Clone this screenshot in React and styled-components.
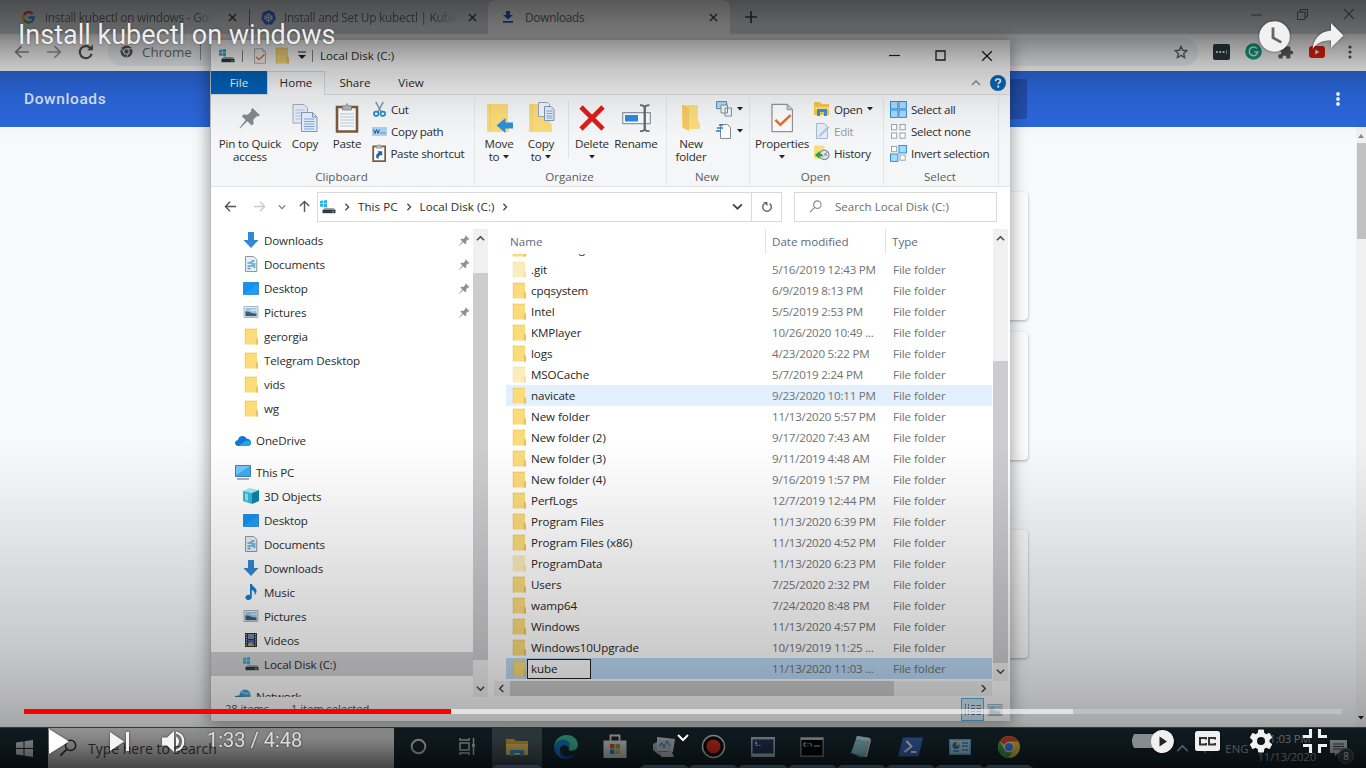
import React from "react";
import styled, { createGlobalStyle, css } from "styled-components";

const Global = createGlobalStyle`
  *, *::before, *::after { box-sizing: border-box; }
  html, body { margin: 0; padding: 0; overflow: hidden; }
  body { font-family: "Open Sans", "Noto Sans", sans-serif; font-size: 12px; color: #222; }
  svg { display: block; flex: none; }
`;

const Stage = styled.div`
  position: relative;
  width: 1366px;
  height: 768px;
  overflow: hidden;
  background: #f8f9fa;
  display: flex;
  flex-direction: column;
`;

/* ---------- browser ---------- */

const TabStrip = styled.div`
  height: 34px;
  background: #dadde1;
  display: flex;
  align-items: stretch;
  flex: none;
  font-size: 11.8px;
  color: #6a6c6f;
`;
const Tab = styled.div`
  width: ${(p) => p.$w}px;
  display: flex;
  align-items: center;
  padding: 0 ${(p) => p.$right}px 0 ${(p) => p.$left}px;
  gap: ${(p) => p.$gap || 9}px;
  ${(p) => p.$active && css`background: #fff; border-radius: 8px 8px 0 0;`}
`;
const TabText = styled.span`
  flex: 1;
  white-space: nowrap;
  overflow: hidden;
  letter-spacing: -0.22px;
  ${(p) => p.$fade && css`mask-image: linear-gradient(90deg, #000 86%, transparent 99%);`}
`;
const TabRule = styled.i`
  width: 1px;
  height: 17px;
  align-self: center;
  background: #777;
`;
const NewTab = styled.div`
  display: flex;
  align-items: center;
  padding-left: 15px;
`;
const Caption = styled.div`
  margin-left: auto;
  display: flex;
  align-items: center;
  gap: 35px;
  padding: 0 11px 6px 0;
`;
const Toolbar = styled.div`
  height: 37px;
  flex: none;
  background: #fff;
  display: flex;
  align-items: center;
  padding: 0 14px 2px 14px;
`;
const NavIcons = styled.div`
  display: flex;
  gap: 16px;
  margin-right: 14px;
`;
const Omnibox = styled.div`
  flex: 1;
  height: 28px;
  border-radius: 14px;
  background: #f0f1f3;
  display: flex;
  align-items: center;
  padding: 0 10px 0 12px;
  gap: 9px;
  font-size: 13.3px;
  color: #6b6f74;
`;
const OmniRule = styled.i`
  width: 1px;
  height: 16px;
  background: #999;
  margin-left: -1px;
`;
const Extensions = styled.div`
  display: flex;
  align-items: center;
  gap: 15px;
  margin-left: 15px;
  & > :last-child { margin-left: 8px; }
`;
const PushRight = styled.div`
  margin-left: auto;
`;
const PageHeader = styled.header`
  height: 56px;
  flex: none;
  background: #2b67dc;
  color: #dfe8fa;
  display: flex;
  align-items: center;
  padding: 0 26px 0 24px;
  font: 500 15.5px Roboto, sans-serif;
  letter-spacing: 0.6px;
`;
const HeaderSearch = styled.div`
  width: 680px;
  height: 40px;
  border-radius: 3px;
  background: #2350ae;
  margin-left: 241px;
`;
const HeaderMenu = styled.div`
  margin-left: auto;
`;
const Page = styled.main`
  flex: 1;
  display: flex;
  background: #f8f9fb;
  min-height: 0;
`;
const Cards = styled.div`
  flex: 1;
  display: flex;
  flex-direction: column;
  padding: 65px 0 0 347px;
`;
const Card = styled.div`
  width: 681px;
  height: 128px;
  flex: none;
  margin-bottom: ${(p) => p.$gap}px;
  background: #fcfcfd;
  border-radius: 4px;
  box-shadow: 0 1px 3px rgba(0, 0, 0, 0.32);
`;
const PageScroll = styled.div`
  width: 10px;
  background: #f1f1f1;
  display: flex;
  flex-direction: column;
  align-items: center;
  padding: 7px 0;
`;
const PageThumb = styled.i`
  width: 9px;
  height: 96px;
  background: #c1c1c1;
  margin: 5px 0 auto 1px;
`;

/* ---------- taskbar ---------- */

const Taskbar = styled.footer`
  height: 41px;
  flex: none;
  background: #182a33;
  border-top: 1px solid #4b5c60;
  display: flex;
  color: #d4d8da;
`;
const StartBtn = styled.div`
  width: 48px;
  display: grid;
  place-items: center;
`;
const SearchBox = styled.div`
  width: 346px;
  background: #e4e4e4;
  display: flex;
  align-items: center;
  padding-left: 11px;
  gap: 11px;
  font-size: 14px;
  color: #444;
`;
const TaskItem = styled.div`
  width: 49.2px;
  display: grid;
  place-items: center;
  border-bottom: 3px solid ${(p) => (p.$open ? "#6f9cc8" : "transparent")};
  border-left: 4px solid transparent;
  border-right: 4px solid transparent;
  background-clip: padding-box;
  ${(p) => p.$active && css`background: #4a5c63; background-clip: border-box; border-color: #4a5c63; border-bottom-color: #7aaad8;`}
`;
const Tray = styled.div`
  margin-left: auto;
  display: flex;
  align-items: center;
  gap: 10px;
  padding-right: 18px;
  font-size: 11.4px;
  color: #aab2b6;
`;
const Clock = styled.div`
  text-align: center;
  line-height: 18px;
  letter-spacing: -0.2px;
  margin: 0 4px 0 -1px;
`;
const Notice = styled.div`
  display: flex;
  align-items: flex-end;
`;
const Badge = styled.span`
  width: 16px;
  height: 16px;
  border-radius: 50%;
  margin: 0 -6px -8px -9px;
  background: #384247;
  border: 1px solid #6a7276;
  font-size: 10px;
  line-height: 14px;
  text-align: center;
  color: #e6e6e6;
`;

/* ---------- explorer window ---------- */

const Explorer = styled.section`
  position: absolute;
  left: 210px;
  top: 40px;
  width: 800px;
  height: 681px;
  background: #fff;
  border-left: 1px solid #b9bcc2;
  box-shadow: 0 2px 14px 2px rgba(0, 0, 0, 0.34);
  display: flex;
  flex-direction: column;
  font-size: 11.6px;
  color: #2c2c2c;
`;
const TitleBar = styled.div`
  height: 31px;
  flex: none;
  display: flex;
  align-items: center;
  padding: 0 17px 0 8px;
`;
const QuickAccess = styled.div`
  display: flex;
  align-items: center;
  gap: 8px;
`;
const TitleText = styled.span`
  margin-left: 7px;
`;
const ThinRule = styled.i`
  width: 1px;
  height: 12px;
  background: #888;
  margin: 0 ${(p) => p.$r}px 0 ${(p) => p.$l}px;
`;
const WinButtons = styled.div`
  margin-left: auto;
  display: flex;
  align-items: center;
  gap: 35px;
`;
const RibbonTabs = styled.div`
  height: 24px;
  flex: none;
  display: flex;
  align-items: stretch;
  border-bottom: 1px solid #d9dadb;
  background: linear-gradient(#fafafa, #f2f2f2);
  text-align: center;
  line-height: 24px;
`;
const RibbonTab = styled.div`
  width: ${(p) => p.$w}px;
  ${(p) => p.$kind === "file" && css`background: #0062b8; color: #fff;`}
  ${(p) => p.$kind === "on" && css`background: #f7f8f9; border: 1px solid #d9dadb; border-bottom: 0; height: 24px; line-height: 22px;`}
`;
const RibbonEnd = styled.div`
  margin-left: auto;
  display: flex;
  align-items: center;
  gap: 9px;
  padding-right: 4px;
`;
const Ribbon = styled.div`
  height: 92px;
  flex: none;
  background: #f5f6f7;
  border-bottom: 1px solid #dfe1e3;
  display: flex;
`;
const Group = styled.div`
  width: ${(p) => p.$w}px;
  display: flex;
  flex-direction: column;
  border-right: 1px solid #e3e5e7;
  margin: 3px 0 1px;
`;
const GroupBody = styled.div`
  height: 71px;
  flex: none;
  display: flex;
  padding: 0 0 0 ${(p) => p.$pad}px;
`;
const GroupName = styled.div`
  text-align: center;
  line-height: 16px;
  margin-left: -2px;
  color: #5c5c5c;
`;
const BigButton = styled.div`
  width: ${(p) => p.$w}px;
  display: flex;
  flex-direction: column;
  align-items: center;
  line-height: 13px;
  text-align: center;
  white-space: nowrap;
  letter-spacing: -0.2px;
`;
const BigIcon = styled.div`
  height: 39px;
  display: grid;
  place-items: center;
`;
const LabelLine = styled.div`
  display: flex;
  align-items: center;
  gap: 4px;
  min-height: 13px;
`;
const SmallColumn = styled.div`
  display: flex;
  flex-direction: column;
  margin-left: ${(p) => p.$ml}px;
`;
const SmallButton = styled.div`
  height: 22px;
  display: flex;
  align-items: center;
  gap: 4px;
  white-space: nowrap;
  letter-spacing: -0.28px;
  color: ${(p) => (p.$dim ? "#999" : "#2c2c2c")};
`;
const InnerRule = styled.i`
  width: 1px;
  height: 58px;
  background: #dfe1e3;
  margin: 2px 2px 0 6px;
`;
const AddressRow = styled.div`
  height: 39px;
  flex: none;
  display: flex;
  align-items: center;
  padding: 0 13px 0 13px;
`;
const AddrNav = styled.div`
  width: 93px;
  display: flex;
  align-items: center;
  gap: 12px;
  & > :first-child { margin-right: 4px; }
`;
const AddrBox = styled.div`
  width: 465px;
  height: 30px;
  border: 1px solid #d9d9d9;
  display: flex;
  align-items: center;
  padding-left: 2px;
  letter-spacing: 0.05px;
`;
const Crumb = styled.span`
  margin: 0 7px;
`;
const Refresh = styled.div`
  width: 30px;
  align-self: stretch;
  border-left: 1px solid #d9d9d9;
  display: grid;
  place-items: center;
  margin-left: 8px;
`;
const SearchField = styled.div`
  margin-left: 12px;
  flex: 1;
  height: 30px;
  border: 1px solid #d9d9d9;
  display: flex;
  align-items: center;
  gap: 13px;
  padding-left: 14px;
  color: #6d6d6d;
`;
const Body = styled.div`
  height: 471px;
  flex: none;
  display: flex;
`;
const NavPane = styled.nav`
  width: 262px;
  padding-top: 2px;
  overflow: hidden;
`;
const NavRow = styled.div`
  height: 24px;
  display: flex;
  align-items: center;
  gap: 5px;
  padding: 0 3px 0 ${(p) => (p.$root ? 24 : 32)}px;
  margin-top: ${(p) => (p.$root ? 8 : 0)}px;
  background: ${(p) => (p.$selected ? "#d4d4d6" : "transparent")};
  white-space: nowrap;
  letter-spacing: -0.14px;
`;
const PinSlot = styled.div`
  margin-left: auto;
`;
const VScroll = styled.div`
  width: 15px;
  background: #f0f0f0;
  display: flex;
  flex-direction: column;
  align-items: center;
  padding: ${(p) => p.$pad};
  margin-top: 3px;
`;
const VThumb = styled.i`
  width: 15px;
  height: ${(p) => p.$h}px;
  margin: ${(p) => p.$top}px 0 auto;
  background: #cdcdcf;
`;
const Files = styled.div`
  margin-left: 6px;
  flex: 1;
  display: flex;
  flex-direction: column;
`;
const FilesTop = styled.div`
  display: flex;
  height: 455px;
`;
const Table = styled.div`
  width: 499px;
  padding: 3px 1px 0 12px;
`;
const HeadRow = styled.div`
  height: 25px;
  display: flex;
  line-height: 25px;
  color: #5c6b80;
  padding-left: 4px;
`;
const HeadCell = styled.div`
  width: ${(p) => p.$w}px;
  padding-left: ${(p) => (p.$first ? 0 : 6)}px;
  border-left: ${(p) => (p.$first ? 0 : 1)}px solid #e2e2e2;
`;
const Rows = styled.div`
  height: 425px;
  overflow: hidden;
`;
const FileRow = styled.div`
  height: 21px;
  display: flex;
  align-items: center;
  white-space: nowrap;
  padding-left: 5px;
  color: #727272;
  letter-spacing: -0.08px;
  background: ${(p) => (p.$state === "hover" ? "#e2f0fd" : p.$state === "selected" ? "#bcdcf8" : "transparent")};
  &:first-child { margin-top: -16px; }
`;
const FileName = styled.span`
  width: 241px;
  margin-left: 4px;
  color: #262626;
`;
const NameEdit = styled.span`
  display: block;
  width: 64px;
  height: 20px;
  line-height: 17px;
  margin-left: -4px;
  padding-left: 3px;
  border: 1px solid #222;
  background: #fff;
`;
const FileDate = styled.span`
  width: 121px;
  letter-spacing: -0.23px;
`;
const HScroll = styled.div`
  height: 15px;
  width: 498px;
  background: #f0f0f0;
  display: flex;
  align-items: center;
  padding: 0 4px 0 3px;
`;
const HThumb = styled.i`
  width: 384px;
  height: 15px;
  background: #cdcdcf;
  margin: 0 auto 0 4px;
`;
const StatusBar = styled.div`
  flex: 1;
  display: flex;
  align-items: flex-start;
  padding: 1px 7px 0 14px;
  gap: 22px;
  line-height: 21px;
  color: #4c5468;
  font-size: 11.2px;
  letter-spacing: -0.05px;
`;
const ViewModes = styled.div`
  margin-left: auto;
  display: flex;
  gap: 3px;
  align-items: center;
`;
const ViewOn = styled.div`
  width: 23px;
  height: 23px;
  display: grid;
  place-items: center;
  background: #cfeafa;
  border: 1px solid #56b2e0;
`;

/* ---------- player overlay ---------- */

const Overlay = styled.div`
  position: absolute;
  inset: 0;
  display: flex;
  flex-direction: column;
  justify-content: space-between;
  background:
    linear-gradient(rgba(0,0,0,.66) 0, rgba(0,0,0,.6) 14px, rgba(0,0,0,.53) 32px, rgba(0,0,0,.42) 42px, rgba(0,0,0,.28) 60px, rgba(0,0,0,.18) 75px, rgba(0,0,0,.09) 92px, rgba(0,0,0,.03) 115px, transparent 140px),
    linear-gradient(transparent 440px, rgba(0,0,0,.03) 480px, rgba(0,0,0,.11) 560px, rgba(0,0,0,.19) 640px, rgba(0,0,0,.26) 690px, rgba(0,0,0,.32) 722px, rgba(0,0,0,.43) 740px, rgba(0,0,0,.7) 768px);
`;
const PlayerTop = styled.div`
  display: flex;
  justify-content: space-between;
  align-items: center;
  height: 73px;
  padding: 0 22px 1px 18px;
`;
const VideoTitle = styled.h1`
  margin: 0 0 2px;
  font: 400 27px/32px Roboto, sans-serif;
  color: #eee;
  text-shadow: 0 0 2px rgba(0, 0, 0, 0.5);
`;
const TopActions = styled.div`
  display: flex;
  align-items: center;
  gap: 22px;
  filter: drop-shadow(0 0 1px rgba(0, 0, 0, 0.6));
`;
const PlayerBottom = styled.div`
  height: 59px;
  padding: 0 24px;
`;
const Track = styled.div`
  height: 5px;
  display: flex;
  background: rgba(255, 255, 255, 0.22);
`;
const Played = styled.i`
  width: 427px;
  background: #f00;
`;
const Loaded = styled.i`
  width: 622px;
  background: rgba(255, 255, 255, 0.52);
`;
const Controls = styled.div`
  height: 54px;
  display: flex;
  align-items: center;
  justify-content: space-between;
  filter: drop-shadow(0 0 1px rgba(0, 0, 0, 0.6));
`;
const LeftControls = styled.div`
  width: 400px;
  display: flex;
  align-items: center;
  padding-left: 25px;
`;
const NextSlot = styled.div`
  margin: 0 32px 0 41px;
`;
const TimeText = styled.span`
  margin: -2px 0 0 22px;
  font: 400 20px/24px Roboto, sans-serif;
  color: #ddd;
`;
const MoreSlot = styled.div`
  align-self: flex-start;
  padding-top: 20px;
`;
const RightControls = styled.div`
  width: 400px;
  display: flex;
  align-items: center;
  justify-content: flex-end;
  padding-right: 15px;
`;
const Autoplay = styled.div`
  width: 42px;
  height: 24px;
  display: flex;
  align-items: center;
  justify-content: flex-end;
  background: linear-gradient(#868b8e, #868b8e) 0 50% / 32px 14px no-repeat;
  clip-path: inset(0 round 12px);
  margin-right: 21px;
`;
const GearSlot = styled.div`
  margin: 0 30px 0 29px;
`;

/* ---------- icons ---------- */

const Svg = ({ w, h = w, vb, children, ...rest }) => (
  <svg width={w} height={h} viewBox={vb || `0 0 ${w} ${h}`} fill="none" {...rest}>{children}</svg>
);
const Cross = ({ s = 9, c = "#444", t = 1.5 }) => (
  <Svg w={s} vb="0 0 10 10"><path d="M1 1l8 8M9 1L1 9" stroke={c} strokeWidth={t} /></Svg>
);
const Chevron = ({ dir = "down", c = "#444", s = 9, t = 1.6 }) => {
  const d = { down: "M1 3l4 4 4-4", up: "M1 7l4-4 4 4", left: "M7 1L3 5l4 4", right: "M3 1l4 4-4 4" }[dir];
  return <Svg w={s} vb="0 0 10 10"><path d={d} stroke={c} strokeWidth={t} /></Svg>;
};
const Caret = ({ up, c = "#222" }) => (
  <Svg w={6} h={4}><path d={up ? "M0 4h6L3 0z" : "M0 0h6L3 3.6z"} fill={c} /></Svg>
);
const Folder = ({ pale, h = 17 }) => (
  <Svg w={16} h={h} vb="0 0 16 17" opacity={pale ? 0.5 : 1}>
    <path d="M2 .8h12v9l.9 1.600v5H2z" fill="#fbdc7b" />
    <path d="M2 .8h12v1H2z" fill="#f1cd68" />
    <path d="M12.800 10.500l1.200-1 1 2v5h-2.200z" fill="#eec258" />
    <path d="M2.200 .8v15.700" stroke="#efc961" strokeWidth=".8" />
  </Svg>
);
const Disk = () => (
  <Svg w={16} h={14}>
    <path d="M0 1l3-.4v2.9H0zM3.6.5L7 0v3.5H3.6zM0 4.1h3V7L0 6.6zM3.6 4.1H7v3.5l-3.4-.5z" fill="#27b1e6" />
    <path d="M4.500 8h9l2 2H3z" fill="#9fa4a6" />
    <path d="M2.500 9.800H15.500v3.400H2.500z" fill="#34393b" />
    <path d="M12 11.700h2" stroke="#49c95d" strokeWidth="1.200" />
  </Svg>
);
const DownArrow = () => (
  <Svg w={16}><path d="M5 0h6v8h4.6L8 16 .4 8H5z" fill="#3388d4" /></Svg>
);
const DocIcon = () => (
  <Svg w={16}>
    <path d="M2.5.5h8.300l3 3v12H2.500z" fill="#e9eef2" stroke="#8e989e" />
    <path d="M4.500 7h4v-2M4.500 10h7v2M8.500 5h3M8.500 8h4M4.500 12.500h3" stroke="#4fa3d4" strokeWidth="1.400" />
  </Svg>
);
const DesktopIcon = () => (
  <Svg w={16} h={13}><path d="M.4.4h15.200v12H.4z" fill="#1492f2" stroke="#0f78cf" strokeWidth=".8" /><path d="M1 12L15 2v10z" fill="#2fa6ff" opacity=".5" /></Svg>
);
const PictureIcon = () => (
  <Svg w={16} h={12} vb="0 0 16 13">
    <path d="M.5.5h15v12H.5z" fill="#f4f6f8" stroke="#a2a8ad" />
    <path d="M2 2h12v9H2z" fill="#9cc3ec" /><path d="M2 6c4-1 7 3 12 2v3H2z" fill="#35606c" />
    <path d="M8 4.500h5" stroke="#fff" />
  </Svg>
);
const CloudIcon = () => (
  <Svg w={16} h={11}>
    <path d="M3.500 11C1 11 0 9.500 0 8s1.200-2.700 2.800-2.800C3.500 2.500 5 1 7.400 1c2 0 3.400 1 4.200 2.700C14.500 3.700 16 5.500 16 7.500S14.500 11 12.500 11z" fill="#0f78d4" />
    <path d="M3.500 11l6.500-5c3-1.500 6 0 6 2s-1.500 3-3.500 3z" fill="#2aa0ee" />
  </Svg>
);
const PcIcon = () => (
  <Svg w={16} h={15}>
    <path d="M.5.500h15v11H.5z" fill="#3fa9f5" stroke="#4680a8" /><path d="M1 1h14L1 10z" fill="#8fd1fb" opacity=".7" />
    <path d="M2 14h12" stroke="#7f8a90" strokeWidth="1.300" />
  </Svg>
);
const CubeIcon = () => (
  <Svg w={16}>
    <path d="M0 3l6-3 10 2-6 3z" fill="#a6e8f2" /><path d="M0 3l9 2v11l-9-3z" fill="#35b9d2" /><path d="M9 5l7-3v11l-7 3z" fill="#0d83a8" />
    <path d="M2 5l3 1v7l-3-1z" fill="#8be0ee" />
  </Svg>
);
const MusicIcon = () => (
  <Svg w={16}><path d="M7 0h1.800c.3 2.500 4.700 3.500 4.700 7 0 1.700-.8 3-1.800 4 .3-2.500-.7-4.300-2.900-5v7c0 1.800-1.600 3-3.500 3S2.400 15 2.400 13.500s1.500-2.800 3.300-2.800c.5 0 .9.100 1.300.2z" fill="#1681cf" /></Svg>
);
const VideoIcon = () => (
  <Svg w={16}>
    <path d="M2 1h12v14H2z" fill="#2f3337" /><path d="M5 2h6v5H5z" fill="#6d8bb8" /><path d="M5 8h6v6H5z" fill="#3d63ba" />
    <path d="M5 12l3-2 3 3v1H5z" fill="#b5a04c" /><path d="M3.400 2v12M12.600 2v12" stroke="#c8ccce" strokeDasharray="1.300 1.300" />
  </Svg>
);
const NetworkIcon = () => (
  <Svg w={16} h={15}>
    <circle cx="10" cy="6" r="5.500" fill="#4b9fcf" /><path d="M6 3c3 0 5 3 8 1" stroke="#b9e0f2" />
    <path d="M0 7l8-1v6H0z" fill="#3480ab" /><path d="M1 13h14" stroke="#555" />
  </Svg>
);
const Pin = ({ s = 12, c = "#8a9299" }) => (
  <Svg w={s} vb="0 0 22 22"><path d="M13.500 1L21 8.300l-2.200 1.300-1.200-.4-3.300 3.600.3 4.200-1.900 1.500-4.400-4.200L1 21.500l-.6-.600L6.700 13 2.800 9.200l1.500-1.800 4.400.4 3.500-3.500L12 2.800z" fill={c} /></Svg>
);
const Pages = ({ s = 28 }) => (
  <Svg w={s} vb="0 0 28 28">
    <path d="M2 .500h11l3.500 3.500v15H2z" fill="#e9f0fb" stroke="#9fadbd" /><path d="M4.500 6h9M4.500 9h9M4.500 12h9M4.500 15h5" stroke="#a9c4ea" />
    <path d="M10.500 8.500h11l4.500 4.500v14.500H10.500z" fill="#e4eefd" stroke="#8798ae" /><path d="M21.500 8.500V13H26" stroke="#8798ae" />
    <path d="M13 15h10.500M13 17.500h10.500M13 20h10.500M13 22.500h10.500M13 25h10.500" stroke="#7fa6e6" strokeWidth="1.100" />
  </Svg>
);
const Clipboard = ({ s = 30, arrow }) => (
  <Svg w={s * 0.8} h={s} vb="0 0 24 30">
    <path d="M2 4h20v24.500H2z" fill="#fbfcfd" stroke="#7b5a3e" strokeWidth={arrow ? 3 : 2.600} />
    <path d="M7.500 3h3l1.500-2.500L13.500 3h3v4h-9z" fill="#b5babd" stroke="#767d82" strokeWidth=".7" />
    {arrow ? <path d="M7 23v-5l4-4-2-2h8v8l-2-2-4 3v4z" fill="#245fb5" /> : <path d="M5 11h14M5 14h14M5 17h14M5 20h14M5 23h14" stroke="#b9cadb" />}
  </Svg>
);
const Scissors = () => (
  <Svg w={15} h={17} vb="0 0 15 18">
    <path d="M3.500 1l6 11M11.500 1l-6 11" stroke="#7e98ac" strokeWidth="1.600" />
    <ellipse cx="4" cy="13.500" rx="2.500" ry="2.300" stroke="#1e88d2" strokeWidth="1.700" /><ellipse cx="11" cy="13.500" rx="2.500" ry="2.300" stroke="#1e88d2" strokeWidth="1.700" />
  </Svg>
);
const PathIcon = () => (
  <Svg w={15} h={9}><path d="M0 0h15v9H0z" fill="#a8d2f2" /><path d="M1.500 2.500l1.500 4 1.500-4 1.500 4 1.300-4M8.500 6h1M10.500 6h1M12.500 6h1" stroke="#29516e" /></Svg>
);
const MoveTo = () => (
  <Svg w={28} h={30}>
    <path d="M2 1h21v18l1 3v7H2z" fill="#fadb78" /><path d="M5 1v28" stroke="#f2cb62" /><path d="M28.500 19.500h-8V15l-9 7.500 9 7.500v-4.500h8z" fill="#2f8edb" />
  </Svg>
);
const CopyTo = () => (
  <Svg w={28} h={31}>
    <path d="M2 2h21v18l2 3v7H2z" fill="#fadb78" /><path d="M5 2v28" stroke="#f2cb62" />
    <path d="M11.500.500h9l2 2v12h-11z" fill="#f1f5fb" stroke="#97a3b4" /><path d="M17.500 4.500h6.500l3 3v11h-9.500z" fill="#e3edfc" stroke="#8395ad" />
    <path d="M19.500 9h6M19.500 11.500h6M19.500 14h6M19.500 16h6" stroke="#7da4e0" />
  </Svg>
);
const RenameIcon = () => (
  <Svg w={29} h={28}>
    <path d="M.700 8.700h27.600v11H.7z" fill="#fafcfe" stroke="#8d9aa5" strokeWidth="1.200" /><path d="M3 11h13v6.500H3z" fill="#2d8add" />
    <path d="M18 1.200c3 0 4.500.8 4.500 2.500v21c0 1.500-2 2.500-4.500 2.500M27.500 1.200c-3 0-4.500.8-4.500 2.500v21c0 1.500 2 2.500 4.500 2.500" stroke="#62696f" strokeWidth="1.800" />
  </Svg>
);
const NewFolderIcon = () => (
  <Svg w={20} h={29}><path d="M1 2h16v16l2 3v5H7l-6-2z" fill="#fbdc7c" /><path d="M1 2l7 3v23l-6-3z" fill="#f2ca64" /></Svg>
);
const PropsIcon = ({ s = 30 }) => (
  <Svg w={s * 0.75} h={s} vb="0 0 23 30">
    <path d="M1 1h15.500L22 6.500V29H1z" fill="#fbfbfb" stroke="#8f9498" strokeWidth="1.300" /><path d="M16.500 1v5.500H22" fill="#cfd3d5" stroke="#8f9498" />
    <path d="M4.500 17l5 5L20 12" stroke="#ee6a28" strokeWidth="2.500" />
  </Svg>
);
const NewItemIcon = () => (
  <Svg w={17}><path d="M.6.600h10v7H.6z" fill="#b8dbf2" stroke="#5189ae" /><path d="M5 4h6.500v8H5zM9 7h6.500v8H9z" fill="#f4f8fb" stroke="#7b8e9d" /></Svg>
);
const EasyAccessIcon = () => (
  <Svg w={17}><path d="M4.500 1.500h7l3 3v11h-10z" fill="#fafbfc" stroke="#828c94" /><path d="M3 2h4M1 5h6M0 8h5" stroke="#2e7cc9" strokeWidth="1.500" /></Svg>
);
const OpenIcon = () => (
  <Svg w={16} h={14}><path d="M0 0h6l1.500 2H15v11H0z" fill="#f3c54b" /><path d="M1 5h14v3H1z" fill="#fbe08a" /><path d="M3 14V7h10v7h-3v-4H6v4z" fill="#3d8fc9" /></Svg>
);
const EditIcon = () => (
  <Svg w={16}><path d="M2.500.500h8l3 3v12h-11z" fill="#e2edf8" stroke="#a6b8cb" /><path d="M5 12l9-9 1.500 1.500-9 9L4 14z" fill="#b5c6d8" /></Svg>
);
const HistoryIcon = () => (
  <Svg w={16} h={16} vb="0 0 17 16">
    <path d="M0 0h11v14H0z" fill="#f9dc80" /><circle cx="11" cy="10" r="5" fill="#dce5ea" stroke="#7c8b94" strokeWidth="1.200" /><path d="M11 10l3-3M11 10h3" stroke="#777" />
    <path d="M1 10l5-4v2.500c2 0 3.500 1 4 4C8.500 11 7.500 11 6 11.200V14z" fill="#28a03c" />
  </Svg>
);
const SelectGrid = ({ on }) => (
  <Svg w={17}>
    {[[1, 1], [9.5, 1], [1, 9.5], [9.5, 9.5]].map(([x, y], i) => {
      const lit = on[i] === "1";
      return <rect key={i} x={lit ? x - 0.5 : x + 0.5} y={lit ? y - 0.5 : y + 0.5} width={lit ? 7.4 : 5.2} height={lit ? 7.4 : 5.2} fill={lit ? "#a6dbff" : "#fff"} stroke={lit ? "#2f8fd6" : "#9aa3aa"} strokeWidth="1" />;
    })}
  </Svg>
);
const Magnifier = ({ s = 13, c = "#888" }) => (
  <Svg w={s} vb="0 0 14 14"><circle cx="9" cy="5" r="4" stroke={c} strokeWidth="1.200" /><path d="M6 8l-5 5" stroke={c} strokeWidth="1.300" /></Svg>
);
const Arrow = ({ dir, c = "#555", w = 13, t = 1.5 }) => {
  const d = { left: "M13 7H1.500M6.500 2l-5 5 5 5", right: "M1 7h11.500M7.500 2l5 5-5 5", up: "M7 13V1.500M2 6.500l5-5 5 5" }[dir];
  return <Svg w={w} vb="0 0 14 14"><path d={d} stroke={c} strokeWidth={t} /></Svg>;
};
const ReloadIcon = ({ s = 12, c = "#555", t = 1.7 }) => (
  <Svg w={s} vb="0 0 14 14"><path d="M12 8.500A5.300 5.300 0 1 1 10.800 3.500" stroke={c} strokeWidth={t} /><path d="M13 .500v5H8z" fill={c} /></Svg>
);
const RefreshIcon = () => (
  <Svg w={12} vb="0 0 14 14"><path d="M10 3a5 5 0 1 1-6 0" stroke="#666" strokeWidth="1.700" /><path d="M2.500 1.200h5v5z" fill="#666" /></Svg>
);
const DotsV = ({ c, r = 1.7 }) => (
  <Svg w={4} h={14}><circle cx="2" cy="2" r={r} fill={c} /><circle cx="2" cy="7" r={r} fill={c} /><circle cx="2" cy="12" r={r} fill={c} /></Svg>
);
const ChromeMono = () => (
  <Svg w={13} vb="0 0 14 14"><circle cx="7" cy="7" r="6.500" fill="#55585c" /><circle cx="7" cy="7" r="2.900" fill="#55585c" stroke="#e6e6e6" strokeWidth="1.200" /><path d="M7 3.900h6M4.300 8.500l-3-5M9.600 8.500l-3 5" stroke="#e6e6e6" /></Svg>
);
const Google = () => (
  <Svg w={13} vb="0 0 14 14" strokeWidth="2.500">
    <path d="M11.500 3.100A5.600 5.600 0 0 0 2 4.600" stroke="#ea4335" /><path d="M2 4.600a5.600 5.600 0 0 0 0 4.900" stroke="#fbbc05" />
    <path d="M2 9.500a5.600 5.600 0 0 0 8.500 1.700" stroke="#34a853" /><path d="M7 7h5.600c0 1.800-.7 3.200-2.100 4.200" stroke="#4285f4" />
  </Svg>
);
const Kube = () => (
  <Svg w={15}>
    <path d="M7.500 0l5.800 2.800 1.500 6.200-4 5.500H4.200L.2 9l1.500-6.200z" fill="#2f6de0" />
    <circle cx="7.500" cy="7.500" r="3.200" stroke="#fff" /><path d="M7.500 2.500v10M2.800 6l9.400 3M12.200 6L2.800 9" stroke="#fff" strokeWidth=".8" />
  </Svg>
);
const DownloadTab = () => (
  <Svg w={10} h={12}><path d="M3 0h4v4h3L5 8.500 0 4h3zM0 10h10v1.800H0z" fill="#2462d8" /></Svg>
);
const Star = () => (
  <Svg w={14} vb="0 0 24 24"><path d="M12 2.500l2.900 6.600 7.100.6-5.400 4.700 1.600 7L12 17.700l-6.200 3.700 1.600-7L2 9.700l7.100-.6z" stroke="#5f6368" strokeWidth="2.400" /></Svg>
);
const LastPass = () => (
  <Svg w={17} h={16}><rect width="17" height="16" rx="2" fill="#2b3a42" /><circle cx="4" cy="8" r="1.100" fill="#fff" /><circle cx="7.300" cy="8" r="1.100" fill="#fff" /><circle cx="10.600" cy="8" r="1.100" fill="#fff" /><path d="M13.500 6v4" stroke="#aaa" /></Svg>
);
const Grammarly = () => (
  <Svg w={17}><circle cx="8.500" cy="8.500" r="8.300" fill="#12a386" /><path d="M11.800 5.500a4.300 4.300 0 1 0 1 3.500H9.500" stroke="#e8f5f2" strokeWidth="1.500" /></Svg>
);
const Puzzle = () => (
  <Svg w={17} vb="0 0 24 24"><path d="M20.500 11H19V7a2 2 0 0 0-2-2h-4V3.500a2.500 2.500 0 0 0-5 0V5H4a2 2 0 0 0-2 2v3.800h1.500a2.700 2.700 0 0 1 0 5.400H2V20a2 2 0 0 0 2 2h3.800v-1.500a2.700 2.700 0 0 1 5.400 0V22H17a2 2 0 0 0 2-2v-4h1.500a2.500 2.500 0 0 0 0-5z" fill="#5f6368" /></Svg>
);
const YouTube = () => (
  <Svg w={16} h={12}><rect width="16" height="12" rx="3" fill="#ef1f10" /><path d="M6.200 3.500v5l4.300-2.500z" fill="#fff" /></Svg>
);
const Help = () => (
  <Svg w={16}>
    <circle cx="8" cy="8" r="8" fill="#0a68b8" /><path d="M5.600 6.200C5.600 4.700 6.600 4 8 4s2.400.8 2.400 2c0 1.600-2.200 1.700-2.200 3.300" stroke="#fff" strokeWidth="1.700" /><circle cx="8.200" cy="11.700" r="1.100" fill="#fff" />
  </Svg>
);
const WinLogo = () => (
  <Svg w={17}><path d="M0 2.500L7.500 1.400v6.600H0zM8.500 1.300L17 0v8H8.500zM0 9h7.500v6.600L0 14.500zM8.500 9H17v8l-8.500-1.300z" fill="#d5dadd" /></Svg>
);
const TaskView = () => (
  <Svg w={18} h={17}><path d="M1 5h9v7H1zM1 0v2h9V0M1 17v-2h9v2M14.500 0v17" stroke="#c4cacd" strokeWidth="1.500" /><path d="M13 6h3v3h-3z" fill="#c4cacd" /></Svg>
);
const TaskFolder = () => (
  <Svg w={22} h={18}><path d="M0 1h8l2 2h12v14H0z" fill="#e9ab32" /><path d="M0 6h22v11H0z" fill="#fdd868" /><path d="M4 18v-6h14v6h-4v-3H8v3z" fill="#3c9edb" /></Svg>
);
const Edge = () => (
  <Svg w={26} vb="0 0 24 24">
    <path d="M1 13C1 6 6 1 12.500 1 19 1 23 5.500 23 10c0 3.500-2.500 5.500-5.500 5.500-2 0-3.300-.7-3-1.500.8-2 .5-5-3-6C7 7 3 9 1 13z" fill="#43c9a0" />
    <path d="M1 12C2.500 6 8 3.500 13 6c3 1.500 3 5 1.500 7-3-5-9-2-8 3 .7 3.500 4 6 8 6.500C7 24.500 1 19 1 12z" fill="#1b7ed6" />
    <path d="M6.500 15c.5 5 7 8 14.500 3-2.500 4-7 5.500-11 4.500-3-1-4.500-4-3.500-7.500z" fill="#1255a8" />
  </Svg>
);
const Store = () => (
  <Svg w={24} h={25}>
    <path d="M7.500 7V1.500h9V7" stroke="#dfe3e5" strokeWidth="1.800" /><path d="M.5 6.500h23V24H.5z" fill="#e3e6e7" />
    <path d="M7 10h4.500v4.500H7z" fill="#d9542f" /><path d="M12.500 10H17v4.500h-4.500z" fill="#7db83a" /><path d="M7 15.500h4.500V20H7z" fill="#2c8fd6" /><path d="M12.500 15.500H17V20h-4.500z" fill="#efb82e" />
  </Svg>
);
const Monitor = () => (
  <Svg w={25} h={22}>
    <path d="M5 1l18 2-2 13-16-1z" fill="#d3d8db" /><path d="M6.500 3l14 1.500-1.500 9-12-1z" fill="#b7cddb" /><path d="M7 10l3-3 2 4 3-6 3 5" stroke="#4b86b4" strokeWidth="1.200" />
    <path d="M1 8l4-2v9l9 1v4l-7-1-6-5z" fill="#b4bbbf" /><path d="M9 16h11l2 5H9z" fill="#cdd2d5" />
  </Svg>
);
const Record = () => (
  <Svg w={25}><circle cx="12.500" cy="12.500" r="11" fill="#0a0a0a" stroke="#d8dcde" strokeWidth="1.500" /><circle cx="12.500" cy="12.500" r="7" fill="#ec3323" /></Svg>
);
const Terminal = ({ black }) => (
  <Svg w={24} h={20}>
    <path d="M.8.800h22.400v18.400H.8z" fill={black ? "#050505" : "#1f3c5e"} stroke={black ? "#7e8486" : "#bac2c7"} strokeWidth="1.500" />
    <path d="M1 1.800h22" stroke="#c7cdd0" strokeWidth={black ? 2.200 : 1.200} />
    {black ? <path d="M4 6v3M4 6h2M4 9h2M8 6v1M8 8.500v1M10 6l2 3.500M14 9h6" stroke="#ddd" /> : <path d="M6 5H4.500v1.500H6v2H4.500M8 8.500h1.500" stroke="#d5e0e8" strokeWidth=".9" />}
    {!black && <path d="M1 16.500h22v2.500H1z" fill="#c3cacd" />}
  </Svg>
);
const Notepad = () => (
  <Svg w={24} h={23}><path d="M8 1l13 2-5 19L2 18z" fill="#8ed3dc" /><path d="M8 1l13 2-1 3L7 4z" fill="#d8e3e5" /><path d="M21 3l1 2-4 17-2 0z" fill="#e3e7e8" /><path d="M2 18l14 4-5 .5z" fill="#4f9aa8" /></Svg>
);
const PowerShell = () => (
  <Svg w={25} h={20}><path d="M5 .500h20L20.500 19.500H0z" fill="#3b6fca" /><path d="M8.500 4l5 5.500L6.500 15M13 15h5.500" stroke="#fff" strokeWidth="1.900" /></Svg>
);
const PanelIcon = () => (
  <Svg w={22} h={16}><path d="M0 0h22v16H0z" fill="#5cb3e0" /><path d="M1.500 1.500h19v13h-19z" fill="#b1dff4" /><circle cx="7" cy="6.500" r="3.600" fill="#2d7cb5" /><path d="M7 6.500V3a3.500 3.500 0 0 1 3.500 3.500z" fill="#f0bd46" /><path d="M13 4h6M13 7h6M4 12h6M13 11h2M16 11h3" stroke="#3b88b7" strokeWidth="1.500" /></Svg>
);
const Chrome = () => (
  <Svg w={24}>
    <circle cx="12" cy="12" r="11" fill="#f5cd3c" /><path d="M12 12L2.500 6.500A11 11 0 0 1 21.500 6.500H12z" fill="#e04a3b" />
    <path d="M2.500 6.500A11 11 0 0 0 11.500 23l5-8.500-4.500-2.500-4.500 2.500z" fill="#39a655" /><circle cx="12" cy="12" r="5.200" fill="#eee" /><circle cx="12" cy="12" r="4" fill="#4a8af4" />
  </Svg>
);
const DetailsIcon = () => (
  <Svg w={17} h={14}><path d="M1.500 1v12M4.500 1v12" stroke="#777" strokeDasharray="2 1" /><path d="M7 2.500h4M12.500 2.500H17M7 5.500h4M12.500 5.500H17M7 8.500h4M12.500 8.500H17M7 11.500h4M12.500 11.500H17" stroke="#67757d" /></Svg>
);

/* ---------- data ---------- */

const quick = [
  ["Downloads", DownArrow, true], ["Documents", DocIcon, true], ["Desktop", DesktopIcon, true], ["Pictures", PictureIcon, true],
  ["gerorgia", Folder], ["Telegram Desktop", Folder], ["vids", Folder], ["wg", Folder],
];
const thisPc = [
  ["3D Objects", CubeIcon], ["Desktop", DesktopIcon], ["Documents", DocIcon], ["Downloads", DownArrow],
  ["Music", MusicIcon], ["Pictures", PictureIcon], ["Videos", VideoIcon], ["Local Disk (C:)", Disk],
];
const files = [
  ["$WinREAgent", ""], [".git", "5/16/2019 12:43 PM", "pale"], ["cpqsystem", "6/9/2019 8:13 PM"], ["Intel", "5/5/2019 2:53 PM"],
  ["KMPlayer", "10/26/2020 10:49 ..."], ["logs", "4/23/2020 5:22 PM"], ["MSOCache", "5/7/2019 2:24 PM", "pale"],
  ["navicate", "9/23/2020 10:11 PM", "hover"], ["New folder", "11/13/2020 5:57 PM"], ["New folder (2)", "9/17/2020 7:43 AM"],
  ["New folder (3)", "9/11/2019 4:48 AM"], ["New folder (4)", "9/16/2019 1:57 PM"], ["PerfLogs", "12/7/2019 12:44 PM"],
  ["Program Files", "11/13/2020 6:39 PM"], ["Program Files (x86)", "11/13/2020 4:52 PM"], ["ProgramData", "11/13/2020 6:23 PM", "pale"],
  ["Users", "7/25/2020 2:32 PM"], ["wamp64", "7/24/2020 8:48 PM"], ["Windows", "11/13/2020 4:57 PM"],
  ["Windows10Upgrade", "10/19/2019 11:25 ..."], ["kube", "11/13/2020 11:03 ...", "selected"],
];
const apps = [
  [TaskFolder, "active"], [Edge], [Store], [Monitor, "open"], [Record, "open"], [Terminal, "open"],
  [() => <Terminal black />, "open"], [Notepad, "open"], [PowerShell, "open"], [PanelIcon, "open"], [Chrome, "open"],
];

/* ---------- pieces ---------- */

const Big = ({ w, icon, l1, l2, caret }) => (
  <BigButton $w={w}>
    <BigIcon>{icon}</BigIcon>
    <LabelLine>{l1}</LabelLine>
    <LabelLine>{l2}{caret && <Caret />}</LabelLine>
  </BigButton>
);

const Browser = () => (
  <>
    <TabStrip>
      <Tab $w={249} $left={22} $right={12} $gap={10}><Google /><TabText $fade>install kubectl on windows - Google</TabText><Cross /></Tab>
      <TabRule />
      <Tab $w={238} $left={11} $right={11} $gap={8}><Kube /><TabText $fade>Install and Set Up kubectl | Kubernetes</TabText><Cross /></Tab>
      <Tab $w={242} $left={15} $right={12} $gap={12} $active><DownloadTab /><TabText>Downloads</TabText><Cross /></Tab>
      <NewTab><Svg w={12}><path d="M6 0v12M0 6h12" stroke="#444" strokeWidth="1.700" /></Svg></NewTab>
      <Caption>
        <Svg w={11}><path d="M0 6h11" stroke="#666" /></Svg>
        <Svg w={11}><path d="M.5 3h7.500v7.500H.5zM3 3V.500h7.500V8H8" stroke="#666" /></Svg>
        <Cross s={12} c="#666" t={1} />
      </Caption>
    </TabStrip>
    <Toolbar>
      <NavIcons><Arrow dir="left" w={16} c="#888" /><Arrow dir="right" w={16} c="#a0a0a0" /><ReloadIcon s={16} t={1.900} c="#555" /></NavIcons>
      <Omnibox><ChromeMono />Chrome<OmniRule /><PushRight><Star /></PushRight></Omnibox>
      <Extensions><LastPass /><Grammarly /><Puzzle /><YouTube /><DotsV c="#555" r={1.600} /></Extensions>
    </Toolbar>
    <PageHeader>Downloads<HeaderSearch /><HeaderMenu><DotsV c="#fff" r={1.900} /></HeaderMenu></PageHeader>
    <Page>
      <Cards><Card $gap={12} /><Card $gap={70} /><Card $gap={0} /></Cards>
      <PageScroll><Caret up c="#888" /><PageThumb /><Caret /></PageScroll>
    </Page>
  </>
);

const TaskbarView = () => (
  <Taskbar>
    <StartBtn><WinLogo /></StartBtn>
    <SearchBox><Magnifier s={18} c="#333" />Type here to search</SearchBox>
    <TaskItem><Svg w={17}><circle cx="8.500" cy="8.500" r="6.800" stroke="#d0d5d8" strokeWidth="2" /></Svg></TaskItem>
    <TaskItem><TaskView /></TaskItem>
    {apps.map(([Icon, st], i) => <TaskItem key={i} $open={!!st} $active={st === "active"}><Icon /></TaskItem>)}
    <Tray>
      <Chevron dir="up" s={13} c="#b6bdc0" t={1.200} />
      <Svg w={16} h={14}><path d="M0 5h3l4-4v12L3 9H0z" fill="#8f979b" /><path d="M9 4.500c1 1.500 1 3.500 0 5M11.500 2.500c2 3 2 6 0 9" stroke="#8f979b" /></Svg>
      <span>ENG</span>
      <Clock>11:03 PM<br />11/13/2020</Clock>
      <Notice><Svg w={17} h={16}><path d="M0 0h17v13H8l-3 3v-3H0z" fill="#c9cdcf" /><path d="M3 4h11M3 6.500h11M3 9h11" stroke="#3b4347" /></Svg><Badge>8</Badge></Notice>
    </Tray>
  </Taskbar>
);

const ExplorerWindow = () => (
  <Explorer>
    <TitleBar>
      <Disk /><ThinRule $l={7} $r={11} />
      <QuickAccess>
        <PropsIcon s={16} />
        <Folder />
        <Svg w={8} h={9}><path d="M0 1h8" stroke="#222" /><path d="M0 4h8L4 8z" fill="#222" /></Svg>
      </QuickAccess>
      <ThinRule $l={6} $r={0} /><TitleText>Local Disk (C:)</TitleText>
      <WinButtons>
        <Svg w={11}><path d="M0 5.500h11" stroke="#222" strokeWidth="1.200" /></Svg>
        <Svg w={11}><path d="M1 1h9v9H1z" stroke="#222" strokeWidth="1.300" /></Svg>
        <Cross s={12} c="#222" t={1.100} />
      </WinButtons>
    </TitleBar>
    <RibbonTabs>
      <RibbonTab $w={56} $kind="file">File</RibbonTab>
      <RibbonTab $w={58} $kind="on">Home</RibbonTab>
      <RibbonTab $w={60}>Share</RibbonTab>
      <RibbonTab $w={52}>View</RibbonTab>
      <RibbonEnd><Chevron dir="up" c="#888" s={10} t={1.300} /><Help /></RibbonEnd>
    </RibbonTabs>
    <Ribbon>
      <Group $w={264}>
        <GroupBody $pad={4}>
          <Big w={70} icon={<Pin s={22} c="#7f8b94" />} l1="Pin to Quick" l2="access" />
          <Big w={40} icon={<Pages />} l1="Copy" />
          <Big w={44} icon={<Clipboard />} l1="Paste" />
          <SmallColumn $ml={3}>
            <SmallButton><Scissors />Cut</SmallButton>
            <SmallButton><PathIcon />Copy path</SmallButton>
            <SmallButton><Clipboard s={18} arrow />Paste shortcut</SmallButton>
          </SmallColumn>
        </GroupBody>
        <GroupName>Clipboard</GroupName>
      </Group>
      <Group $w={192}>
        <GroupBody $pad={3}>
          <Big w={42} icon={<MoveTo />} l1="Move" l2="to" caret />
          <Big w={42} icon={<CopyTo />} l1="Copy" l2="to" caret />
          <InnerRule />
          <Big w={42} icon={<Svg w={26} h={26}><path d="M2 2l22 22M24 2L2 24" stroke="#dc1d1d" strokeWidth="4.600" /></Svg>} l1="Delete" caret />
          <Big w={46} icon={<RenameIcon />} l1="Rename" />
        </GroupBody>
        <GroupName>Organize</GroupName>
      </Group>
      <Group $w={83}>
        <GroupBody $pad={3}>
          <Big w={42} icon={<NewFolderIcon />} l1="New" l2="folder" />
          <SmallColumn $ml={4}>
            <SmallButton><NewItemIcon /><Caret /></SmallButton>
            <SmallButton><EasyAccessIcon /><Caret /></SmallButton>
          </SmallColumn>
        </GroupBody>
        <GroupName>New</GroupName>
      </Group>
      <Group $w={134}>
        <GroupBody $pad={5}>
          <Big w={54} icon={<PropsIcon />} l1="Properties" caret />
          <SmallColumn $ml={5}>
            <SmallButton><OpenIcon />Open <Caret /></SmallButton>
            <SmallButton $dim><EditIcon />Edit</SmallButton>
            <SmallButton><HistoryIcon />History</SmallButton>
          </SmallColumn>
        </GroupBody>
        <GroupName>Open</GroupName>
      </Group>
      <Group $w={115}>
        <GroupBody $pad={6}>
          <SmallColumn $ml={0}>
            <SmallButton><SelectGrid on="1111" />Select all</SmallButton>
            <SmallButton><SelectGrid on="0000" />Select none</SmallButton>
            <SmallButton><SelectGrid on="0110" />Invert selection</SmallButton>
          </SmallColumn>
        </GroupBody>
        <GroupName>Select</GroupName>
      </Group>
    </Ribbon>
    <AddressRow>
      <AddrNav><Arrow dir="left" /><Arrow dir="right" c="#ccc" /><Chevron s={8} c="#777" /><Arrow dir="up" /></AddrNav>
      <AddrBox>
        <Disk /><Crumb><Chevron dir="right" s={8} /></Crumb>This PC<Crumb><Chevron dir="right" s={8} /></Crumb>Local Disk (C:)<Crumb><Chevron dir="right" s={8} /></Crumb>
        <PushRight><Chevron s={11} /></PushRight>
        <Refresh><RefreshIcon /></Refresh>
      </AddrBox>
      <SearchField><Magnifier />Search Local Disk (C:)</SearchField>
    </AddressRow>
    <Body>
      <NavPane>
        {quick.map(([name, Icon, pinned]) => (
          <NavRow key={name}><Icon />{name}{pinned && <PinSlot><Pin s={11} /></PinSlot>}</NavRow>
        ))}
        <NavRow $root><CloudIcon />OneDrive</NavRow>
        <NavRow $root><PcIcon />This PC</NavRow>
        {thisPc.map(([name, Icon]) => <NavRow key={name} $selected={name === "Local Disk (C:)"}><Icon />{name}</NavRow>)}
        <NavRow $root><NetworkIcon />Network</NavRow>
      </NavPane>
      <VScroll $pad="5px 0 4px"><Chevron dir="up" /><VThumb $h={387} $top={30} /><Chevron /></VScroll>
      <Files>
        <FilesTop>
          <Table>
            <HeadRow><HeadCell $first $w={255}>Name</HeadCell><HeadCell $w={120}>Date modified</HeadCell><HeadCell $w={90}>Type</HeadCell></HeadRow>
            <Rows>
              {files.map(([name, date, st]) => (
                <FileRow key={name} $state={st}>
                  <Folder pale={st === "pale"} />
                  <FileName>{st === "selected" ? <NameEdit>{name}</NameEdit> : name}</FileName>
                  <FileDate>{date}</FileDate>{date && "File folder"}
                </FileRow>
              ))}
            </Rows>
          </Table>
          <VScroll $pad="5px 0 5px"><Chevron dir="up" /><VThumb $h={302} $top={118} /><Chevron /></VScroll>
        </FilesTop>
        <HScroll><Chevron dir="left" /><HThumb /><Chevron dir="right" /></HScroll>
      </Files>
    </Body>
    <StatusBar><span>28 items</span><span>1 item selected</span><ViewModes><ViewOn><DetailsIcon /></ViewOn><PictureIcon /></ViewModes></StatusBar>
  </Explorer>
);

const Player = () => (
  <Overlay>
    <PlayerTop>
      <VideoTitle>Install kubectl on windows</VideoTitle>
      <TopActions>
        <Svg w={31}><circle cx="15.500" cy="15.500" r="15.300" fill="#f1f1f1" /><path d="M14 6.500v10.300l8.300 4.600" stroke="#666" strokeWidth="2.800" /></Svg>
        <Svg w={32} h={27}><path d="M19 0l12.500 12.500L19 25v-7.500C10 17.500 4.500 20 .5 26 2 15.500 8 8.500 19 7.500z" fill="#f1f1f1" /></Svg>
      </TopActions>
    </PlayerTop>
    <PlayerBottom>
      <Track><Played /><Loaded /></Track>
      <Controls>
        <LeftControls>
          <Svg w={20} h={25}><path d="M0 0l20 12.500L0 25z" fill="#fff" /></Svg>
          <NextSlot><Svg w={20} h={19}><path d="M0 0l14 9.500L0 19zM16 0h3v19h-3z" fill="#f4f4f4" /></Svg></NextSlot>
          <Svg w={23} h={21}><path d="M0 6.500h5L12 0v21l-7-6.500H0z" fill="#f4f4f4" /><path d="M14 5.500c4 2 4 8 0 10z" fill="#f4f4f4" /><path d="M14 1.500c9.500 2.500 9.500 15.500 0 18" stroke="#f4f4f4" strokeWidth="2.300" /></Svg>
          <TimeText>1:33 / 4:48</TimeText>
        </LeftControls>
        <MoreSlot><Svg w={12} h={8}><path d="M1 1l5 5 5-5" stroke="#fff" strokeWidth="2" /></Svg></MoreSlot>
        <RightControls>
          <Autoplay><Svg w={23}><circle cx="11.500" cy="11.500" r="11.500" fill="#f0f0f0" /><path d="M8.500 6.500v10l7.500-5z" fill="#222" /></Svg></Autoplay>
          <Svg w={25} h={20}>
            <rect width="25" height="20" rx="2.500" fill="#f0f0f0" />
            <path d="M11 8.500V7H5v6.500h6V12M20 8.500V7h-6v6.500h6V12" stroke="#333" strokeWidth="2" />
          </Svg>
          <GearSlot>
            <Svg w={24} vb="1.5 1.5 21 21"><path fillRule="evenodd" fill="#f0f0f0" d="M19.430 12.980c.04-.32.07-.64.07-.98s-.03-.66-.07-.98l2.110-1.650c.19-.15.24-.42.12-.64l-2-3.460c-.12-.22-.39-.3-.61-.22l-2.490 1c-.52-.4-1.080-.73-1.690-.98l-.38-2.650C14.460 2.180 14.250 2 14 2h-4c-.25 0-.46.18-.49.42l-.38 2.650c-.61.25-1.170.59-1.690.98l-2.490-1c-.23-.09-.49 0-.61.22l-2 3.460c-.13.22-.07.49.12.64l2.110 1.650c-.04.32-.07.65-.07.98s.03.66.07.98l-2.110 1.650c-.19.15-.24.42-.12.64l2 3.460c.12.22.39.3.61.22l2.490-1c.52.4 1.080.73 1.690.98l.38 2.650c.03.24.24.42.49.42h4c.25 0 .46-.18.49-.42l.38-2.650c.61-.25 1.170-.59 1.690-.98l2.490 1c.23.09.49 0 .61-.22l2-3.460c.12-.22.07-.49-.12-.64l-2.110-1.650zM12 15.500a3.500 3.500 0 1 1 0-7 3.500 3.500 0 0 1 0 7z" /></Svg>
          </GearSlot>
          <Svg w={24}><path d="M7.500 0v7.500H0M16.500 0v7.500H24M7.500 24v-7.500H0M16.500 24v-7.500H24" stroke="#f0f0f0" strokeWidth="3.100" /></Svg>
        </RightControls>
      </Controls>
    </PlayerBottom>
  </Overlay>
);

export default function App() {
  return (
    <>
      <Global />
      <Stage>
        <Browser />
        <TaskbarView />
        <ExplorerWindow />
        <Player />
      </Stage>
    </>
  );
}
